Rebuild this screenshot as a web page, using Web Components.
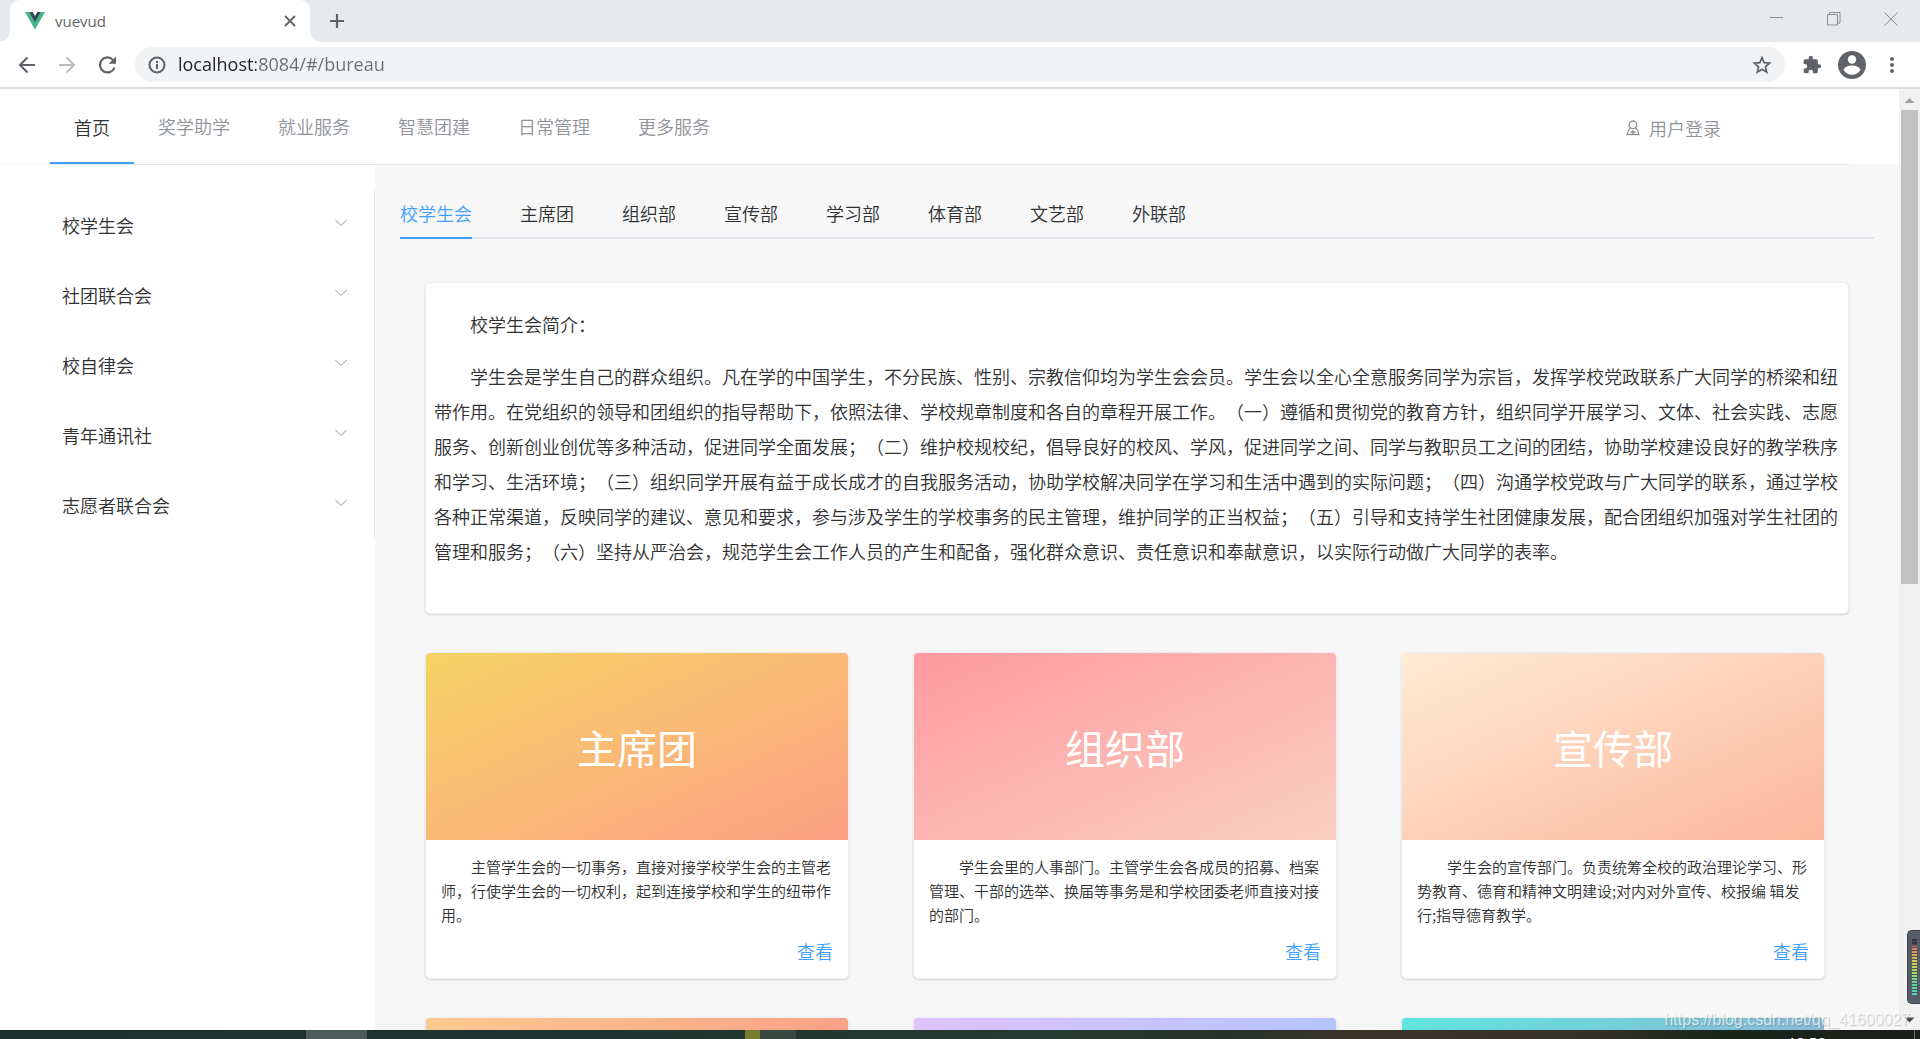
<!DOCTYPE html>
<html lang="zh-CN">
<head>
<meta charset="utf-8">
<title>vuevud</title>
<style>
  html, body { height: 100%; margin: 0; }
  body { overflow: hidden; background: #fff; color: #303133; font: 350 18px/24px "Noto Sans CJK SC", "Noto Sans", sans-serif; text-spacing-trim: space-all; }
</style>
</head>
<body>
<app-window>
  <browser-chrome slot="chrome" heading="vuevud" address="localhost:8084/#/bureau"></browser-chrome>
  <site-header>
    <nav-link active>首页</nav-link>
    <nav-link>奖学助学</nav-link>
    <nav-link>就业服务</nav-link>
    <nav-link>智慧团建</nav-link>
    <nav-link>日常管理</nav-link>
    <nav-link>更多服务</nav-link>
    <span slot="user">用户登录</span>
  </site-header>
  <side-menu slot="side">
    <side-item>校学生会</side-item>
    <side-item>社团联合会</side-item>
    <side-item>校自律会</side-item>
    <side-item>青年通讯社</side-item>
    <side-item>志愿者联合会</side-item>
  </side-menu>
  <dept-tabs slot="main">
    <tab-label active>校学生会</tab-label>
    <tab-label>主席团</tab-label>
    <tab-label>组织部</tab-label>
    <tab-label>宣传部</tab-label>
    <tab-label>学习部</tab-label>
    <tab-label>体育部</tab-label>
    <tab-label>文艺部</tab-label>
    <tab-label>外联部</tab-label>
  </dept-tabs>
  <intro-card slot="main">
    <span slot="heading">校学生会简介：</span>
    学生会是学生自己的群众组织。凡在学的中国学生，不分民族、性别、宗教信仰均为学生会会员。学生会以全心全意服务同学为宗旨，发挥学校党政联系广大同学的桥梁和纽带作用。在党组织的领导和团组织的指导帮助下，依照法律、学校规章制度和各自的章程开展工作。（一）遵循和贯彻党的教育方针，组织同学开展学习、文体、社会实践、志愿服务、创新创业创优等多种活动，促进同学全面发展；（二）维护校规校纪，倡导良好的校风、学风，促进同学之间、同学与教职员工之间的团结，协助学校建设良好的教学秩序和学习、生活环境；（三）组织同学开展有益于成长成才的自我服务活动，协助学校解决同学在学习和生活中遇到的实际问题；（四）沟通学校党政与广大同学的联系，通过学校各种正常渠道，反映同学的建议、意见和要求，参与涉及学生的学校事务的民主管理，维护同学的正当权益；（五）引导和支持学生社团健康发展，配合团组织加强对学生社团的管理和服务；（六）坚持从严治会，规范学生会工作人员的产生和配备，强化群众意识、责任意识和奉献意识，以实际行动做广大同学的表率。
  </intro-card>
  <card-grid slot="main">
    <dept-card style="--from:#f6d365;--to:#fda085"><span slot="name">主席团</span>主管学生会的一切事务，直接对接学校学生会的主管老师，行使学生会的一切权利，起到连接学校和学生的纽带作用。</dept-card>
    <dept-card style="--from:#ff9a9e;--to:#fad0c4"><span slot="name">组织部</span>学生会里的人事部门。主管学生会各成员的招募、档案管理、干部的选举、换届等事务是和学校团委老师直接对接的部门。</dept-card>
    <dept-card style="--from:#ffecd2;--to:#fcb69f"><span slot="name">宣传部</span>学生会的宣传部门。负责统筹全校的政治理论学习、形势教育、德育和精神文明建设;对内对外宣传、校报编 辑发行;指导德育教学。</dept-card>
    <dept-card plain style="--from:#fccb90;--to:#f57b80"></dept-card>
    <dept-card plain style="--from:#e0c3fc;--to:#8ec5fc"></dept-card>
    <dept-card plain style="--from:#5ee7df;--to:#b490ca"></dept-card>
  </card-grid>
  <scroll-rail slot="rail"></scroll-rail>
  <level-gauge slot="overlay"></level-gauge>
  <corner-mark slot="overlay">https://blog.csdn.net/qq_41600027</corner-mark>
  <task-strip slot="taskbar">10:50</task-strip>
</app-window>

<script>
const define = (name, html, setup) => {
  const template = document.createElement('template');
  template.innerHTML = html;
  customElements.define(name, class extends HTMLElement {
    constructor() {
      super();
      this.attachShadow({ mode: 'open' }).append(template.content.cloneNode(true));
    }
    connectedCallback() { if (setup) setup(this, this.shadowRoot); }
  });
};

define('app-window', `
<style>
  :host { display: flex; flex-direction: column; height: 100vh; overflow: hidden; }
  .view { flex: 1; min-height: 0; display: flex; position: relative; }
  .page { flex: 1; min-width: 0; overflow: hidden; display: flex; flex-direction: column; background: #f7f7f7; }
  .cols { display: flex; flex: 1; min-height: 0; }
  main { flex: 1; min-width: 0; padding: 24px 25px 0; }
</style>
<slot name="chrome"></slot>
<div class="view">
  <div class="page">
    <slot></slot>
    <div class="cols"><slot name="side"></slot><main><slot name="main"></slot></main></div>
  </div>
  <slot name="rail"></slot>
  <slot name="overlay"></slot>
</div>
<slot name="taskbar"></slot>`);

define('browser-chrome', `
<style>
  :host { display: block; flex: none; font-family: "Open Sans", "Noto Sans", sans-serif; font-weight: 400; color: #5f6368; border-bottom: 2px solid #dadce0; }
  button { border: 0; padding: 0; background: none; color: inherit; display: grid; place-items: center; }
  svg { display: block; }
  .strip { height: 42px; background: #e6eaed; display: flex; padding-left: 10px; }
  .tab { width: 273px; padding: 0 12px 0 15px; background: #fff; border-radius: 10px 10px 0 0; display: flex; align-items: center; gap: 10px; font-size: 15px; position: relative; }
  .tab::before, .tab::after { content: ""; position: absolute; bottom: 0; width: 10px; height: 10px; }
  .tab::before { right: 100%; background: radial-gradient(circle at 0 0, #e6eaed 9px, #fff 10px); }
  .tab::after { left: 100%; background: radial-gradient(circle at 100% 0, #e6eaed 9px, #fff 10px); }
  .tab span { flex: 1; }
  .plus { margin-left: 19px; }
  .win { margin-left: auto; padding-right: 22px; display: flex; gap: 43px; height: 37px; color: #8b8e91; }
  .bar { height: 45px; background: #fff; display: flex; align-items: center; padding: 0 18px 0 17px; }
  .nav { display: flex; gap: 20px; margin-right: 17px; }
  .pill { flex: 1; height: 35px; margin-right: 17px; border-radius: 18px; background: #f1f3f4; display: flex; align-items: center; gap: 11px; padding: 0 13px 0 12px; }
  input { flex: 1; min-width: 0; border: 0; padding: 0 0 2px; outline: 0; font: 18px/26px "Open Sans", "Noto Sans", sans-serif; color: transparent; background: linear-gradient(90deg, #202124 78px, #6a6e73 78px) text; }
  .tools { display: flex; align-items: center; gap: 16px; }
</style>
<div class="strip">
  <div class="tab">
    <svg width="20" height="18" viewBox="0 0 20 18"><path fill="#41b883" d="M0 0h4l6 10.4L16 0h4L10 17.6z"/><path fill="#35495e" d="M4 0h3.700L10 4l2.300-4H16l-6 10.400z"/></svg>
    <span></span>
    <button aria-label="关闭标签页"><svg width="16" height="16" viewBox="0 0 16 16" stroke="currentColor" stroke-width="1.800"><path d="M3 3l10 10M13 3L3 13"/></svg></button>
  </div>
  <button class="plus" aria-label="新标签页"><svg width="16" height="16" viewBox="0 0 16 16" stroke="currentColor" stroke-width="2.200"><path d="M8 1v14M1 8h14"/></svg></button>
  <div class="win">
    <button aria-label="最小化"><svg width="14" height="14" viewBox="0 0 14 14" stroke="currentColor"><path d="M0 5.500h13"/></svg></button>
    <button aria-label="还原"><svg width="14" height="14" viewBox="0 0 14 14" fill="none" stroke="currentColor"><path d="M.5 2.500h10v10.500H.5zM2.500 2.500v-2h10.500v10.500h-2.500"/></svg></button>
    <button aria-label="关闭"><svg width="14" height="14" viewBox="0 0 14 14" stroke="currentColor"><path d="M.5.500l13 13M13.500.500l-13 13"/></svg></button>
  </div>
</div>
<div class="bar">
  <div class="nav">
    <button aria-label="后退"><svg width="20" height="20" viewBox="0 0 20 20" fill="none" stroke="currentColor" stroke-width="2"><path d="M18 10H3.500M10.500 2.500L3 10l7.500 7.500"/></svg></button>
    <button aria-label="前进" disabled style="color:#babcbe"><svg width="20" height="20" viewBox="0 0 20 20" fill="none" stroke="currentColor" stroke-width="2"><path d="M2 10h14.500M9.500 2.500L17 10l-7.500 7.500"/></svg></button>
    <button aria-label="刷新"><svg width="21" height="20" viewBox="0 0 21 20" fill="none" stroke="currentColor" stroke-width="2.200"><path d="M17.500 12.500a7.500 7.500 0 1 1-1.700-7.800"/><path d="M19 1.500v7.300h-7.300z" fill="currentColor" stroke="none"/></svg></button>
  </div>
  <div class="pill">
    <svg width="20" height="20" viewBox="0 0 20 20" fill="none" stroke="currentColor" stroke-width="2"><circle cx="10" cy="10" r="7.500"/><path d="M10 9v5M10 6v2"/></svg>
    <input type="text" aria-label="地址">
    <button aria-label="收藏"><svg width="20" height="20" viewBox="0 0 20 20" fill="none" stroke="currentColor" stroke-width="1.700"><path d="M10 2.700l2.100 5 5.500.5-4.200 3.600 1.300 5.400L10 14.300l-4.700 2.900 1.300-5.400L2.400 8.200l5.500-.5z"/></svg></button>
  </div>
  <div class="tools">
    <button aria-label="扩展程序"><svg width="20" height="20" viewBox="0 0 24 24" fill="currentColor"><path d="M20.500 11H19V7a2 2 0 0 0-2-2h-4V3.500a2.500 2.500 0 0 0-5 0V5H4a2 2 0 0 0-2 2v3.800h1.500a2.700 2.700 0 0 1 0 5.400H2V20a2 2 0 0 0 2 2h3.800v-1.500a2.700 2.700 0 0 1 5.400 0V22H17a2 2 0 0 0 2-2v-4h1.500a2.500 2.500 0 0 0 0-5z"/></svg></button>
    <button aria-label="用户"><svg width="28" height="28" viewBox="0 0 28 28"><circle cx="14" cy="14" r="14" fill="currentColor"/><circle cx="14" cy="8.500" r="4.200" fill="#fff"/><path fill="#fff" d="M5.500 19c1.500-3.400 5-4.500 8.500-4.500s7 1.100 8.500 4.500c-1.900 3-5 4.800-8.500 4.800S7.400 22 5.500 19z"/></svg></button>
    <button aria-label="菜单"><svg width="20" height="20" viewBox="0 0 20 20" fill="currentColor"><circle cx="10" cy="4" r="2"/><circle cx="10" cy="10" r="2"/><circle cx="10" cy="16" r="2"/></svg></button>
  </div>
</div>`, (el, root) => {
  root.querySelector('.tab span').textContent = el.getAttribute('heading');
  root.querySelector('input').value = el.getAttribute('address');
});

define('site-header', `
<style>
  :host { display: block; flex: none; padding: 0 50px; background: linear-gradient(#fff 75px, transparent 75px); }
  .row { height: 75px; display: flex; border-bottom: 1px solid #e6e6e6; }
  nav { display: flex; flex: 1; }
  a { display: flex; align-items: center; gap: 9px; margin-right: 128px; padding-top: 2px; color: #909399; text-decoration: none; }
</style>
<div class="row">
  <nav><slot></slot></nav>
  <a href="#/login">
    <svg width="14" height="16" viewBox="0 0 14 16" fill="none" stroke="currentColor" stroke-width="1.300"><circle cx="7" cy="4.800" r="3.800"/><path d="M4.500 7.800C2.500 9.500 1.300 11.500 1 14.500h12c-.3-3-1.500-5-3.500-6.700M4.300 12h5.400M7 10v4"/></svg>
    <slot name="user"></slot>
  </a>
</div>`);

define('nav-link', `
<style>
  :host { display: flex; }
  a { display: flex; align-items: center; padding: 0 24px; color: #909399; text-decoration: none; border-bottom: 2px solid transparent; }
  :host([active]) a { color: #303133; border-color: #409eff; padding-top: 3px; }
</style>
<a href="#/"><slot></slot></a>`);

define('side-menu', `
<style>
  :host { display: block; flex: none; width: 375px; background: #fff; }
  nav { margin-top: 24px; border-right: 1px solid #e6e6e6; }
</style>
<nav><slot></slot></nav>`);

define('side-item', `
<style>
  :host { display: block; }
  button { width: 100%; height: 70px; display: flex; align-items: center; justify-content: space-between; border: 0; padding: 2px 26px 0 62px; background: none; font: inherit; color: #303133; text-align: left; }
  svg { margin-bottom: 5px; }
</style>
<button aria-expanded="false"><slot></slot><svg width="14" height="8" viewBox="0 0 14 8" fill="none" stroke="#909399"><path d="M1.500 1L7 6.500 12.500 1"/></svg></button>`);

define('dept-tabs', `
<style>
  :host { display: flex; gap: 48px; height: 50px; box-shadow: inset 0 -2px #e4e7ed; margin-bottom: 43px; }
</style>
<slot></slot>`, el => el.setAttribute('role', 'tablist'));

define('tab-label', `
<style>
  :host { display: flex; }
  button { border: 0; border-bottom: 2px solid transparent; padding: 0; background: none; font: inherit; color: #303133; }
  :host([active]) button { color: #409eff; border-color: #409eff; }
</style>
<button role="tab"><slot></slot></button>`);

define('intro-card', `
<style>
  :host { display: block; margin: 0 25px 38px; padding: 24px 8px 27px; background: #fff; border: 1px solid #ebeef5; border-radius: 5px; box-shadow: 0 1px 2px rgba(0, 0, 0, .15); line-height: 35px; }
  p { margin: 0 0 17px; text-indent: 2em; }
</style>
<p><slot name="heading"></slot></p>
<p><slot></slot></p>`);

define('card-grid', `
<style>
  :host { display: grid; grid-template-columns: repeat(3, 1fr); gap: 38px 64px; margin: 0 49px 0 25px; }
</style>
<slot></slot>`);

define('dept-card', `
<style>
  :host { display: block; background: #fff; border: 1px solid #ebeef5; border-radius: 5px; box-shadow: 0 1px 2px rgba(0, 0, 0, .15); overflow: hidden; }
  h2 { height: 187px; margin: 0; display: grid; place-items: center; background: linear-gradient(to bottom right, var(--from), var(--to)); color: #fff; font-size: 40px; font-weight: 400; }
  .body { padding: 15px; }
  p { margin: 0 0 12px; font-size: 15px; text-indent: 2em; }
  a { display: block; text-align: right; color: #409eff; text-decoration: none; }
</style>
<h2><slot name="name"></slot></h2>
<div class="body"><p><slot></slot></p><a href="#/detail">查看</a></div>`, (el, root) => {
  if (el.hasAttribute('plain')) root.querySelector('.body').remove();
});

define('scroll-rail', `
<style>
  :host { flex: none; width: 21px; background: #f1f1f1; display: flex; flex-direction: column; align-items: center; }
  svg { flex: none; }
  .track { flex: 1; align-self: stretch; padding: 0 2px; }
  .thumb { height: 474px; max-height: 100%; background: #c1c1c1; }
</style>
<svg width="21" height="21" viewBox="0 0 21 21" fill="#a3a3a3"><path d="M5.500 14h10l-5-5z"/></svg>
<div class="track"><div class="thumb"></div></div>
<svg width="21" height="21" viewBox="0 0 21 21" fill="#505050"><path d="M5.500 8.500h10l-5 5z"/></svg>`);

define('level-gauge', `
<style>
  :host { position: absolute; right: 0; bottom: 26px; width: 13px; height: 74px; box-sizing: border-box; border: 1px solid #3d414d; border-right: 0; border-radius: 5px 0 0 5px; background: #565b69; padding: 8px 3px 8px 4px; }
  div { height: 100%; background: repeating-linear-gradient(transparent 0 2px, #4a4f5c 2px 3px), linear-gradient(#33363f 0 10%, #e0705c 14%, #e0a050 26%, #d8d050 42%, #a8d860 60%, #60d890 78%, #48d8c8); }
</style>
<div></div>`);

define('corner-mark', `
<style>
  :host { position: absolute; right: 10px; bottom: 0; font: 16px/20px "Liberation Sans", sans-serif; color: rgba(255, 255, 255, .7); text-shadow: 1px 1px 1px rgba(0, 0, 0, .2); }
</style>
<slot></slot>`);

define('task-strip', `
<style>
  :host { flex: none; height: 9px; overflow: hidden; display: flex; background: linear-gradient(90deg, #1c302e, #21342f 35%, #263a32 55%, #26332b 64%, #3a3428 70%, #34302a 82%, #1a2619 90%, #1b1e1a); color: #fff; font: 15px/20px "Open Sans", "Noto Sans", sans-serif; }
  i { display: block; }
  .a { margin-left: 306px; width: 61px; background: #4c5b58; }
  .b { margin-left: 378px; width: 15px; background: #767c2e; }
  .c { width: 36px; background: #384942; }
  span { margin: 2px 88px 0 auto; }
  .d { width: 1px; margin-right: 5px; background: #70756f; }
</style>
<i class="a"></i><i class="b"></i><i class="c"></i><span><slot></slot></span><i class="d"></i>`);
</script>
</body>
</html>
